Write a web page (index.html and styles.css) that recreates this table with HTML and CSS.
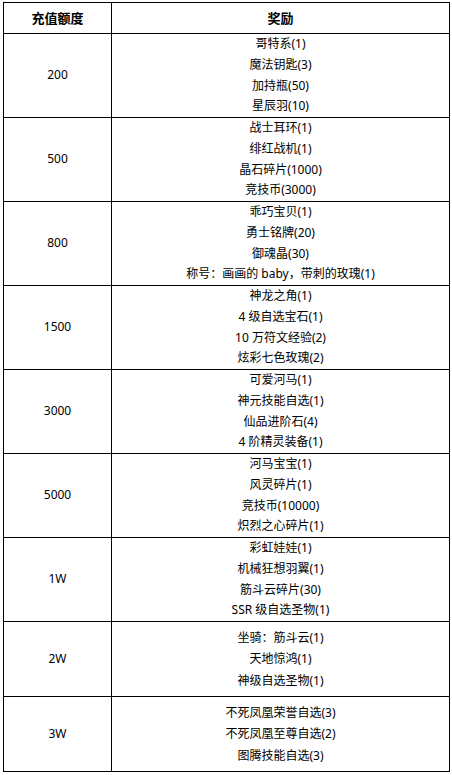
FILE: index.html
```html
<!DOCTYPE html>
<html lang="zh-CN">
<head>
<meta charset="utf-8">
<title>充值奖励</title>
<link rel="stylesheet" href="styles.css">
</head>
<body>
<table class="reward-table">
  <colgroup>
    <col class="col-amount">
    <col class="col-reward">
  </colgroup>
  <thead>
    <tr class="head-row">
      <th>充值额度</th>
      <th>奖励</th>
    </tr>
  </thead>
  <tbody>
    <tr class="row-4">
      <td>200</td>
      <td><div>哥特系(1)</div><div>魔法钥匙(3)</div><div>加持瓶(50)</div><div>星辰羽(10)</div></td>
    </tr>
    <tr class="row-4">
      <td>500</td>
      <td><div>战士耳环(1)</div><div>绯红战机(1)</div><div>晶石碎片(1000)</div><div>竞技币(3000)</div></td>
    </tr>
    <tr class="row-4">
      <td>800</td>
      <td><div>乖巧宝贝(1)</div><div>勇士铭牌(20)</div><div>御魂晶(30)</div><div>称号：画画的 baby，带刺的玫瑰(1)</div></td>
    </tr>
    <tr class="row-4">
      <td>1500</td>
      <td><div>神龙之角(1)</div><div>4 级自选宝石(1)</div><div>10 万符文经验(2)</div><div>炫彩七色玫瑰(2)</div></td>
    </tr>
    <tr class="row-4">
      <td>3000</td>
      <td><div>可爱河马(1)</div><div>神元技能自选(1)</div><div>仙品进阶石(4)</div><div>4 阶精灵装备(1)</div></td>
    </tr>
    <tr class="row-4">
      <td>5000</td>
      <td><div>河马宝宝(1)</div><div>风灵碎片(1)</div><div>竞技币(10000)</div><div>炽烈之心碎片(1)</div></td>
    </tr>
    <tr class="row-4">
      <td>1W</td>
      <td><div>彩虹娃娃(1)</div><div>机械狂想羽翼(1)</div><div>筋斗云碎片(30)</div><div>SSR 级自选圣物(1)</div></td>
    </tr>
    <tr class="row-3">
      <td>2W</td>
      <td><div>坐骑：筋斗云(1)</div><div>天地惊鸿(1)</div><div>神级自选圣物(1)</div></td>
    </tr>
    <tr class="row-3">
      <td>3W</td>
      <td><div>不死凤凰荣誉自选(3)</div><div>不死凤凰至尊自选(2)</div><div>图腾技能自选(3)</div></td>
    </tr>
  </tbody>
</table>
</body>
</html>
```

FILE: styles.css
```css
html, body {
  background: #fff;
}
body {
  margin: 2px 0 0 3px;
  font-family: "Noto Sans", "Noto Sans CJK SC", sans-serif;
  font-size: 12px;
  color: #000;
}
.reward-table {
  border-collapse: collapse;
  table-layout: fixed;
  width: 446px;
}
.col-amount { width: 108px; }
.col-reward { width: 338px; }
.reward-table th,
.reward-table td {
  border: 1px solid #000;
  padding: 0;
  text-align: center;
  vertical-align: middle;
}
.head-row th {
  height: 30px;
  font-size: 13px;
  font-weight: bold;
  line-height: 30px;
}
.row-4 td {
  height: 83px;
  line-height: 20.75px;
}
.row-3 td {
  height: 74px;
  line-height: 21.5px;
}
```
